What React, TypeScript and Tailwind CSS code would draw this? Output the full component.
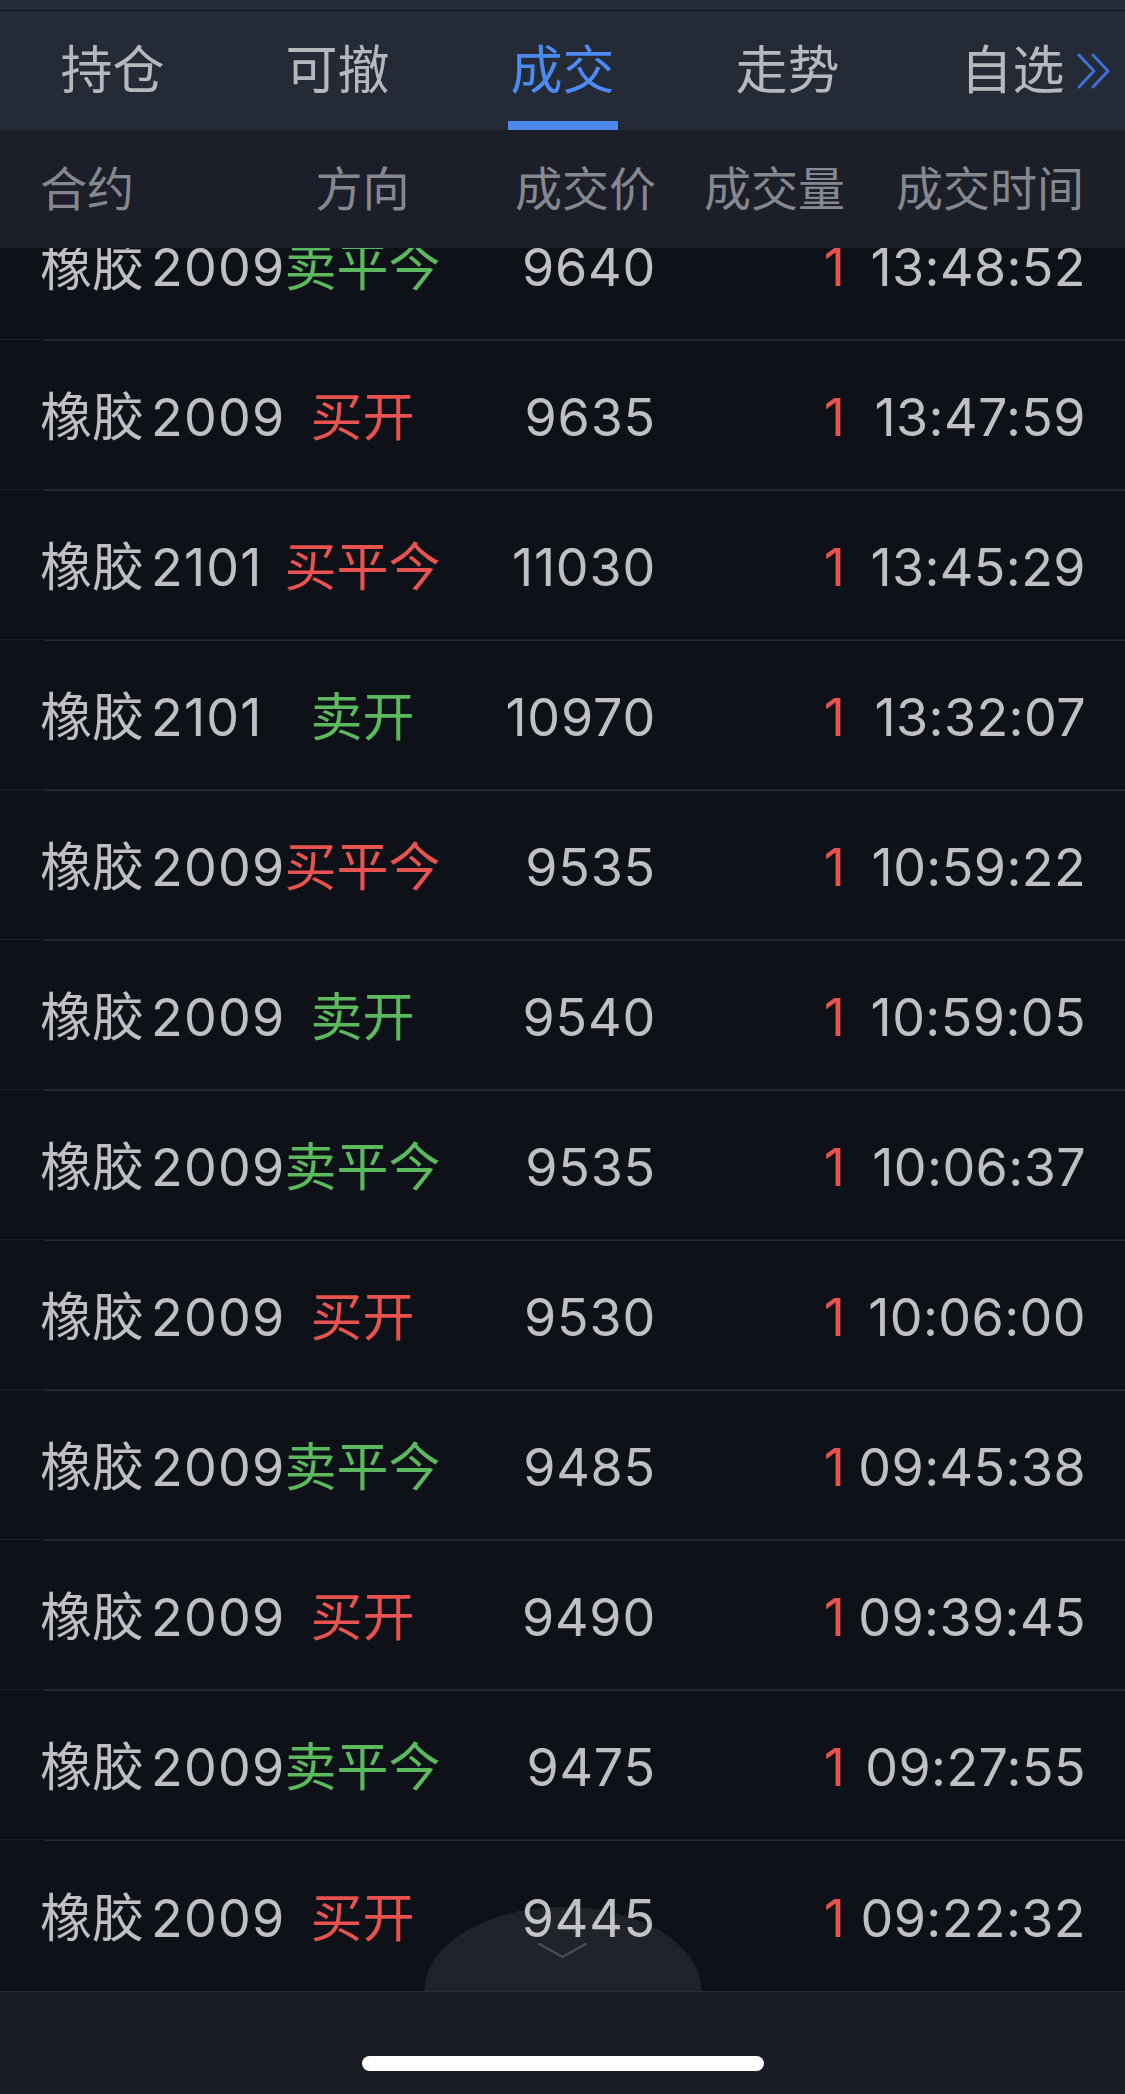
import React from 'react';

type Trade = {
  contract: string;
  side: string;
  buy: boolean;
  price: string;
  qty: string;
  time: string;
};

const trades: Trade[] = [
  { contract: '2009', side: '卖平今', buy: false, price: '9640', qty: '1', time: '13:48:52' },
  { contract: '2009', side: '买开', buy: true, price: '9635', qty: '1', time: '13:47:59' },
  { contract: '2101', side: '买平今', buy: true, price: '11030', qty: '1', time: '13:45:29' },
  { contract: '2101', side: '卖开', buy: false, price: '10970', qty: '1', time: '13:32:07' },
  { contract: '2009', side: '买平今', buy: true, price: '9535', qty: '1', time: '10:59:22' },
  { contract: '2009', side: '卖开', buy: false, price: '9540', qty: '1', time: '10:59:05' },
  { contract: '2009', side: '卖平今', buy: false, price: '9535', qty: '1', time: '10:06:37' },
  { contract: '2009', side: '买开', buy: true, price: '9530', qty: '1', time: '10:06:00' },
  { contract: '2009', side: '卖平今', buy: false, price: '9485', qty: '1', time: '09:45:38' },
  { contract: '2009', side: '买开', buy: true, price: '9490', qty: '1', time: '09:39:45' },
  { contract: '2009', side: '卖平今', buy: false, price: '9475', qty: '1', time: '09:27:55' },
  { contract: '2009', side: '买开', buy: true, price: '9445', qty: '1', time: '09:22:32' },
];

const tabs = ['持仓', '可撤', '成交', '走势', '自选'];

const TradeRow: React.FC<{ t: Trade; first: boolean; last: boolean }> = ({ t, first, last }) => (
  <div className={first ? '-mt-[57px]' : ''}>
    <div className={`flex items-center pl-[40px] pt-[6px] ${last ? 'h-[150px]' : 'h-[148px]'} text-[52px] text-[#bfc0c4] whitespace-nowrap`}>
      <div className="w-[245px] flex items-center">
        <span>橡胶</span>
        <span className="ml-[7px] tracking-[1.2px]">{t.contract}</span>
      </div>
      <div className={`w-[155px] flex justify-center ${t.buy ? 'text-[#e8524f]' : 'text-[#5cba5e]'}`}>
        {t.side}
      </div>
      <div className="w-[216px] text-right tracking-[0.8px]">{t.price}</div>
      <div className="w-[189px] text-right text-[#e8524f]">{t.qty}</div>
      <div className="w-[241px] text-right tracking-[0.4px]">{t.time}</div>
    </div>
    {!last && (
      <>
        <div className="h-px bg-[#1d2029]" />
        <div className="ml-[45px] h-px bg-[#282b35]" />
      </>
    )}
  </div>
);

export default function App() {
  return (
    <div
      className="w-[1125px] h-[2094px] bg-[#0e1118] flex flex-col overflow-hidden"
      style={{ fontFamily: 'Inter, "Noto Sans CJK SC", sans-serif' }}
    >
      {/* status strip */}
      <div className="h-[11px] bg-[#262b38] border-b border-[#12151c]" />

      {/* tabs */}
      <div className="relative h-[119px] bg-[#252a37] grid grid-cols-5">
        {tabs.map((name, i) => (
          <div key={name} className="relative flex items-center justify-center">
            <span className={`text-[52px] leading-none ${i === 2 ? 'text-[#4b8bf2]' : 'text-[#b7b8bd]'}`}>{name}</span>
            {i === 2 && <div className="absolute bottom-0 w-[110px] h-[9px] bg-[#4a87ea]" />}
          </div>
        ))}
        <svg className="absolute right-[14px] top-[42px]" width="34" height="36" viewBox="0 0 34 36" fill="none">
          <path d="M2 2 L17 18 L2 34" stroke="#3f70d8" strokeWidth="3" strokeLinecap="round" strokeLinejoin="round" />
          <path d="M16 2 L31 18 L16 34" stroke="#3f70d8" strokeWidth="3" strokeLinecap="round" strokeLinejoin="round" />
        </svg>
      </div>

      {/* column header */}
      <div className="relative z-10 h-[118px] bg-[#1c1f2a] flex items-center pl-[40px] text-[47px] text-[#86888f] whitespace-nowrap">
        <div className="w-[245px]">合约</div>
        <div className="w-[155px] flex justify-center">方向</div>
        <div className="w-[216px] text-right">成交价</div>
        <div className="w-[189px] text-right">成交量</div>
        <div className="w-[239px] text-right">成交时间</div>
      </div>

      {/* trade list */}
      <div className="relative flex-1 overflow-hidden">
        {trades.map((t, i) => (
          <TradeRow key={i} t={t} first={i === 0} last={i === trades.length - 1} />
        ))}
        <div className="pointer-events-none absolute bottom-0 left-1/2 -translate-x-1/2 w-[277px] h-[84px] bg-white/[0.08] rounded-tl-[50%_100%] rounded-tr-[50%_100%] flex justify-center">
          <svg className="mt-[35px]" width="50" height="17" viewBox="0 0 50 17" fill="none">
            <path d="M2 2 L25 15 L48 2" stroke="#4a4c55" strokeWidth="2.5" strokeLinecap="round" strokeLinejoin="round" />
          </svg>
        </div>
      </div>

      {/* bottom bar */}
      <div className="h-[103px] bg-[#1b1d26] border-t border-[#2a2c35] flex justify-center">
        <div className="mt-[64px] w-[402px] h-[15px] rounded-full bg-white" />
      </div>
    </div>
  );
}
